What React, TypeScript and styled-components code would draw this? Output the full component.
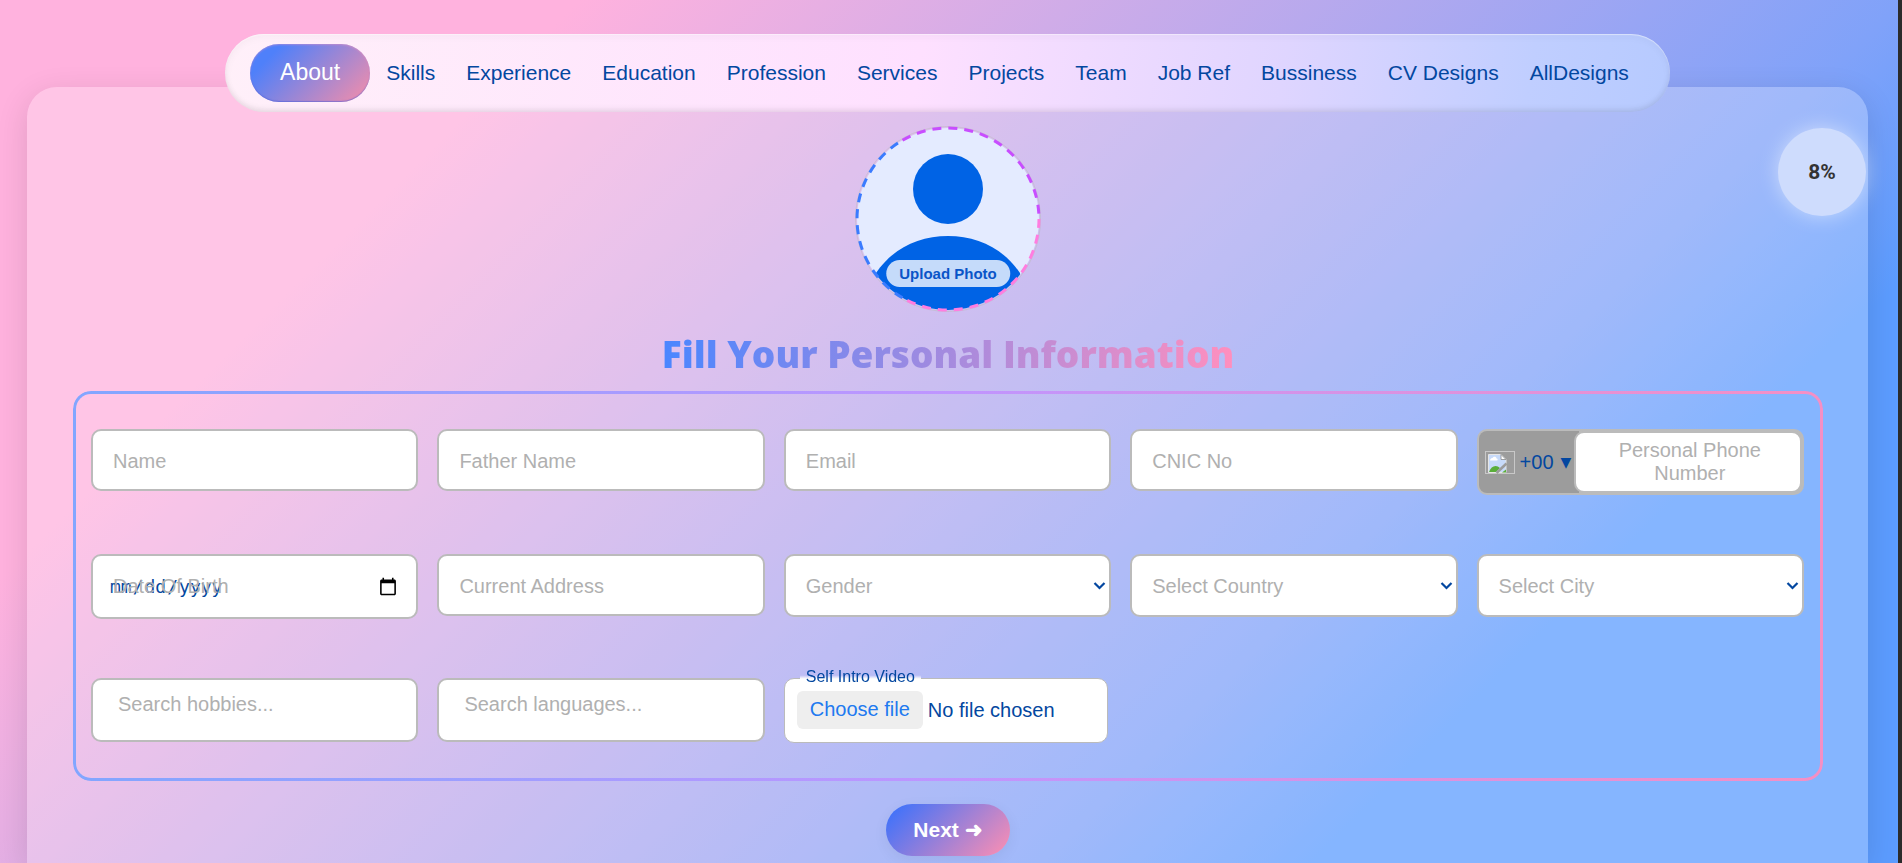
import React from "react";
import styled, { createGlobalStyle } from "styled-components";

const sans = `"Liberation Sans", Arial, sans-serif`;

const GlobalStyle = createGlobalStyle`
  *, *::before, *::after { box-sizing: border-box; }
  html { background: #2b2b2b; }
  body { margin: 0; font-family: ${sans}; color: #0347a0; }
  input, select, button { font-family: inherit; color: inherit; margin: 0; }
`;

const Page = styled.div`
  position: relative;
  min-height: 100vh;
  margin-right: 4px;
  padding: 34px 30px 0 27px;
  overflow: hidden;
  display: flex;
  flex-direction: column;
  background: linear-gradient(135deg, #ffb2de 21%, #80a2f9 69%, #5c9cff 79%);
`;

const Nav = styled.nav`
  position: relative;
  z-index: 2;
  align-self: center;
  display: flex;
  align-items: center;
  gap: 1px;
  margin-bottom: -25px;
  padding: 10px 26px 10px 25px;
  border-radius: 40px;
  background: linear-gradient(100deg, #fff0f9 0%, #fee0ff 48%, #dfd5ff 73%, #c0ceff 90%, #b6caff 100%);
  box-shadow: inset 0 1px 1px rgba(255, 255, 255, 0.5), inset 0 -4px 6px -2px rgba(0, 0, 0, 0.1),
    inset 0 2px 10px rgba(0, 0, 0, 0.04);
`;

const NavLink = styled.a<{ $active?: boolean }>`
  padding: ${(p) => (p.$active ? "0 30px 2px" : "0 15px")};
  border-radius: 29px;
  font-size: ${(p) => (p.$active ? 23 : 21)}px;
  line-height: ${(p) => (p.$active ? 56 : 58)}px;
  color: ${(p) => (p.$active ? "#fff" : "#0347a0")};
  text-decoration: none;
  white-space: nowrap;
  background: ${(p) => (p.$active ? "linear-gradient(135deg, #4f80fa 18%, #e38cb2 90%)" : "none")};
  box-shadow: ${(p) =>
    p.$active ? "inset 0 1px 2px rgba(255, 150, 190, 0.4), inset 0 -1px 1px rgba(60, 90, 220, 0.5)" : "none"};
`;

const Card = styled.main`
  flex: 1;
  display: flex;
  flex-direction: column;
  align-items: center;
  padding: 39px 45px 7px 46px;
  border-radius: 30px 30px 0 0;
  background: rgba(255, 255, 255, 0.25);
  box-shadow: 0 8px 32px rgba(0, 0, 0, 0.12);
`;

const Progress = styled.output`
  position: absolute;
  z-index: 3;
  top: 128px;
  right: 32px;
  width: 88px;
  height: 88px;
  border-radius: 50%;
  display: grid;
  place-items: center;
  font-family: Roboto, sans-serif;
  font-size: 21px;
  font-weight: 700;
  color: #333;
  background: #cedcfd;
  box-shadow: 0 0 20px rgba(255, 255, 255, 0.5);
`;

const Avatar = styled.label`
  position: relative;
  display: flex;
  width: 186px;
  height: 186px;
  cursor: pointer;
  svg { display: block; width: 100%; height: 100%; }
  input { position: absolute; inset: 0; opacity: 0; width: 100%; height: 100%; }
`;

const AvatarTag = styled.span`
  position: absolute;
  left: 50%;
  bottom: 25px;
  transform: translateX(-50%);
  padding: 0 13px;
  border-radius: 14px;
  font-size: 15px;
  line-height: 27px;
  font-weight: 700;
  white-space: nowrap;
  color: #0a55c8;
  background: #c5dbfa;
`;

const Title = styled.h1`
  margin: 17px 0 12px;
  font-family: "Open Sans", "Noto Sans", sans-serif;
  font-weight: 800;
  font-size: 37px;
  line-height: 50px;
  color: transparent;
  background: linear-gradient(90deg, #4a86ff, #ff8fbe);
  background-clip: text;
  -webkit-background-clip: text;
`;

const Form = styled.form`
  position: relative;
  width: 100%;
  display: grid;
  grid-template-columns: repeat(5, minmax(0, 1fr));
  column-gap: 19px;
  row-gap: 59px;
  align-items: start;
  padding: 38px 19px 38px 18px;

  &::before {
    content: "";
    position: absolute;
    inset: 0;
    padding: 3px;
    border-radius: 18px;
    background: linear-gradient(90deg, #82a6ff, #bf95ff 50%, #f58fc4);
    mask: linear-gradient(#000 0 0) content-box exclude, linear-gradient(#000 0 0);
    pointer-events: none;
  }
`;

const Field = styled.div`
  position: relative;
  display: flex;
`;

const Label = styled.label<{ $top?: boolean }>`
  position: absolute;
  left: ${(p) => (p.$top ? 27 : 22)}px;
  top: ${(p) => (p.$top ? 15 : 21)}px;
  font-size: 20px;
  line-height: 22px;
  color: #b0b0b0;
  pointer-events: none;
`;

const Input = styled.input<{ $height?: number }>`
  width: 100%;
  height: ${(p) => p.$height ?? 62}px;
  padding: 0 16px;
  border: 2px solid #bbb;
  border-radius: 10px;
  outline: none;
  background: #fff;
  font-size: 18px;
  &[type="date"] { font-family: "DejaVu Sans Mono", monospace; }
  &::-webkit-calendar-picker-indicator { width: 20px; height: 20px; }
`;

const Select = styled.select`
  width: 100%;
  height: 63px;
  padding: 0 24px 0 20px;
  border: 2px solid #bbb;
  border-radius: 10px;
  appearance: none;
  background: #fff;
  font-size: 18px;
`;

const Chevron = styled.svg`
  position: absolute;
  right: 5px;
  top: 27px;
  pointer-events: none;
`;

const Phone = styled.div`
  display: flex;
  width: 100%;
  height: 66px;
  border: 2px solid #bbb;
  border-radius: 10px;
  background: #bbb;
`;

const CodeButton = styled.button`
  flex: none;
  display: flex;
  align-items: center;
  gap: 5px;
  width: 100px;
  height: 62px;
  padding: 0 0 0 6px;
  border: 0;
  border-radius: 8px 0 0 8px;
  margin-right: -5px;
  background: #9c9c9c;
  font-size: 20px;
`;

const Caret = styled.span`
  font-family: "DejaVu Sans", sans-serif;
  font-size: 14px;
  margin-left: 2px;
`;

const PhoneInput = styled.div`
  position: relative;
  flex: 1;
  display: flex;
`;

const PhoneLabel = styled.label`
  position: absolute;
  inset: 0;
  display: grid;
  place-items: center;
  padding: 0 28px 0 32px;
  text-align: center;
  font-size: 20px;
  line-height: 23px;
  color: #b0b0b0;
`;

const FileBox = styled.div`
  display: flex;
  align-items: flex-start;
  gap: 5px;
  width: 99%;
  height: 65px;
  padding: 12px;
  border: 1px solid #bbb;
  border-radius: 10px;
  background: #fff;
  font-size: 20px;
  line-height: 38px;
  input { position: absolute; inset: 0; width: 100%; height: 100%; opacity: 0; }
`;

const FileButton = styled.span`
  padding: 0 13px 2px;
  border-radius: 6px;
  line-height: 36px;
  background: #eee;
  color: #2079f0;
`;

const FileLabel = styled.label`
  position: absolute;
  left: 16px;
  top: -10px;
  padding: 0 6px;
  font-size: 16px;
  line-height: 18px;
  background: linear-gradient(transparent 40%, #fff 60%);
`;

const NextButton = styled.button`
  margin-top: 23px;
  height: 52px;
  padding: 0 27px;
  border: 0;
  border-radius: 26px;
  font-size: 21px;
  font-weight: 700;
  color: #fff;
  background: linear-gradient(135deg, #3370ff, #ff8fb1);
  box-shadow: 0 4px 15px rgba(0, 0, 0, 0.06);
`;

const links = [
  "Skills",
  "Experience",
  "Education",
  "Profession",
  "Services",
  "Projects",
  "Team",
  "Job Ref",
  "Bussiness",
  "CV Designs",
  "AllDesigns",
];

interface TextFieldProps {
  id: string;
  label: string;
  type?: string;
  height?: number;
  top?: boolean;
}

function TextField({ id, label, type = "text", height, top }: TextFieldProps) {
  return (
    <Field>
      <Input id={id} type={type} $height={height} />
      <Label htmlFor={id} $top={top}>{label}</Label>
    </Field>
  );
}

function SelectField({ id, label }: { id: string; label: string }) {
  return (
    <Field>
      <Select id={id} defaultValue="">
        <option value="" />
      </Select>
      <Label htmlFor={id}>{label}</Label>
      <Chevron width="13" height="9" viewBox="0 0 13 9" aria-hidden="true">
        <path d="M1.500 2l5 5 5-5" fill="none" stroke="#0347a0" strokeWidth="2.200" />
      </Chevron>
    </Field>
  );
}

function FlagPlaceholder() {
  return (
    <svg width="30" height="23" viewBox="0 0 30 23" aria-hidden="true">
      <rect x=".5" y=".5" width="29" height="22" fill="none" stroke="#c8c8c8" />
      <path d="M3.500 3.500H16l5 5V21.500H3.500z" fill="#c7dafa" stroke="#e6e6e6" />
      <path d="M5 9.500c0-2 2-2.500 2.500-2.500 1-2 4-1.500 4 .5 1.500 0 1.500 2 .5 2z" fill="#fff" />
      <path d="M4 21c2-6 7-8 11-4l-4 4z" fill="#5aae3a" />
      <path d="M16 3.500v5h5z" fill="#fff" stroke="#8a8a8a" strokeWidth=".8" />
      <path d="M21.500 12.500L11.500 22" stroke="#9c9c9c" strokeWidth="2.500" />
      <path d="M17 21.500l4-3v3z" fill="#5aae3a" />
    </svg>
  );
}

function AvatarArt() {
  return (
    <svg viewBox="0 0 186 186" aria-hidden="true">
      <defs>
        <clipPath id="face">
          <circle cx="93" cy="93" r="91" />
        </clipPath>
      </defs>
      <circle cx="93" cy="93" r="92.500" fill="none" stroke="#bbb" strokeOpacity=".5" />
      <circle cx="93" cy="93" r="91" fill="#e4ebff" />
      <g clipPath="url(#face)" fill="#0063e5">
        <circle cx="93" cy="63" r="35" />
        <path d="M21 147C38 122 64 110 93 110s55 12 72 37v39H21z" />
      </g>
      <g fill="none" strokeWidth="3" strokeDasharray="9 7">
        <path stroke="#ff7de0" d="M184 93A91 91 0 0 1 47.500 171.800" />
        <path stroke="#3a7bff" d="M47.500 171.800A91 91 0 0 1 47.500 14.200" />
        <path stroke="#c84dff" d="M47.500 14.200A91 91 0 0 1 184 93" />
      </g>
    </svg>
  );
}

export default function App() {
  return (
    <>
      <GlobalStyle />
      <Page>
        <Nav>
          <NavLink href="#about" $active>About</NavLink>
          {links.map((l) => (
            <NavLink key={l} href={"#" + l.toLowerCase().replace(" ", "-")}>{l}</NavLink>
          ))}
        </Nav>
        <Progress>8%</Progress>
        <Card>
          <Avatar>
            <input type="file" accept="image/*" />
            <AvatarArt />
            <AvatarTag>Upload Photo</AvatarTag>
          </Avatar>
          <Title>Fill Your Personal Information</Title>
          <Form id="personal">
            <TextField id="name" label="Name" />
            <TextField id="father" label="Father Name" />
            <TextField id="email" label="Email" type="email" />
            <TextField id="cnic" label="CNIC No" />
            <Phone>
              <CodeButton type="button">
                <FlagPlaceholder />
                <span>+00</span>
                <Caret>▼</Caret>
              </CodeButton>
              <PhoneInput>
                <Input id="phone" type="tel" />
                <PhoneLabel htmlFor="phone">Personal Phone Number</PhoneLabel>
              </PhoneInput>
            </Phone>
            <TextField id="dob" label="Date Of Birth" type="date" height={65} />
            <TextField id="address" label="Current Address" />
            <SelectField id="gender" label="Gender" />
            <SelectField id="country" label="Select Country" />
            <SelectField id="city" label="Select City" />
            <TextField id="hobbies" label="Search hobbies..." height={64} top />
            <TextField id="languages" label="Search languages..." height={64} top />
            <Field>
              <FileBox>
                <FileButton>Choose file</FileButton>
                <span>No file chosen</span>
                <input id="video" type="file" accept="video/*" />
              </FileBox>
              <FileLabel htmlFor="video">Self Intro Video</FileLabel>
            </Field>
          </Form>
          <NextButton form="personal">Next ➜</NextButton>
        </Card>
      </Page>
    </>
  );
}
